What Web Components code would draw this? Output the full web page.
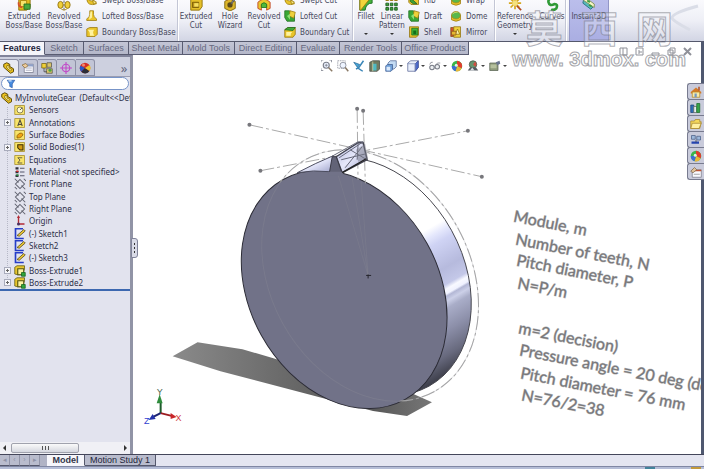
<!DOCTYPE html>
<html lang="en">
<head>
<meta charset="utf-8">
<title>MyInvoluteGear</title>
<style>
html,body{margin:0;height:100%}
body{overflow:hidden;font-family:"DejaVu Sans Condensed","DejaVu Sans",sans-serif;font-size:8px;color:#46485c}
</style>
</head>
<body>
<cad-app></cad-app>
<script>
const ICONS = {
  extrude:'<path d="M2 2l9-2 4 3v9l-4 3H2z" fill="#e3ba1c" stroke="#8d6e08"/><path d="M4 4h7v7H4z" fill="#f8e26a" stroke="#a8820c"/><path d="M8 8h7v6H8z" fill="#4aa83c" stroke="#236b20"/><path d="M2 6q-1 5 4 6" fill="none" stroke="#d4502a" stroke-width="2"/>',
  revolve:'<path d="M8 0v16" stroke="#555" stroke-dasharray="3 1"/><ellipse cx="4" cy="9" rx="3" ry="4" fill="#f0ce3a" stroke="#8d6e08"/><ellipse cx="12" cy="9" rx="3" ry="4" fill="#f0ce3a" stroke="#8d6e08"/><path d="M5 14q3 2 6 0" fill="none" stroke="#a8820c"/>',
  cut:'<path d="M2 3l4-3h9v11l-3 4H2z" fill="#e5c02a" stroke="#8d6e08"/><path d="M4 6h7v6H4z" fill="#b58e16" stroke="#7a5d06"/><path d="M6 7h5v4H6z" fill="#f4de62"/>',
  hole:'<path d="M2 5l5-3 7 3v8l-6 3-6-3z" fill="#dcb52a" stroke="#7d650d"/><ellipse cx="8" cy="9" rx="3" ry="3" fill="#5b4a1a"/><path d="M9 7l5-7 1 1-5 7z" fill="#8c8c9c" stroke="#555"/><path d="M2 1l3 3M5 0v3" stroke="#c24424"/>',
  revcut:'<path d="M1 6q7-7 14 0v7l-4 2V9q-3-3-6 0v6l-4-2z" fill="#e9c62e" stroke="#bf4126"/><path d="M5 8q3-3 6 0v4H5z" fill="#4fb83c" stroke="#257a20"/>',
  sweep:'<path d="M11 3q-8-3-8 3 0 4 8 3l3 4q-12 4-13-6 0-9 10-7z" fill="#e9c42a" stroke="#99780c"/><path d="M9 8l5 3-4 3z" fill="#f9e882" stroke="#99780c"/>',
  loft:'<path d="M5 1h5v5q0 3 4 6v2H1v-2q4-3 4-6z" fill="#e9c42a" stroke="#99780c"/><path d="M6 2h2v8l-4 3z" fill="#fbf0a0"/>',
  boundary:'<path d="M1 4l4-2h10v9l-3 3H1z" fill="#e9c42a" stroke="#99780c"/><path d="M2 5h9q-3 3 0 8H5q1-5-3-8z" fill="#fff3a0"/>',
  green:'<path d="M1 1h6l7 6v8H4L1 10z" fill="#39a735" stroke="#1d6b21"/><path d="M8 1l7 2-2 8-6-3z" fill="#efd13a" stroke="#99780c"/><path d="M4 8l4-3v8z" fill="#8be073"/>',
  gcut:'<path d="M1 5l4-3h10v9l-3 4H1z" fill="#e9c42a" stroke="#8f700c"/><path d="M1 5l4-3h10l-3 4z" fill="#43aa38" stroke="#1d6b21"/><path d="M3 8h8q-3 2-2 5H3z" fill="#fff3a0"/>',
  fillet:'<path d="M1 0h14v7q-7 0-8 8H1z" fill="#45b13c" stroke="#1d6b21"/><path d="M1 3l8-3h5L2 15H1z" fill="#f2d43c" stroke="#99780c"/>',
  pattern:'<path d="M1 1h3v3H1zM6 1h3v3H6zM11 1h3v3h-3z" fill="#eac52c" stroke="#8d6e08"/><path d="M1 7h3v3H1zM6 7h3v3H6zM11 7h3v3h-3zM1 12h3v3H1zM6 12h3v3H6zM11 12h3v3h-3z" fill="#3fa437" stroke="#1d5d21"/>',
  rib:'<path d="M1 1h7v6h6v7H4L1 11z" fill="#ebc82e" stroke="#8f700c"/><path d="M3 5l9 8H7L3 10z" fill="#3fa437" stroke="#1d5d21"/>',
  shell:'<path d="M2 1h12v11l-3 3H2z" fill="#e6c22a" stroke="#8f700c"/><path d="M5 3h8v9H5z" fill="#3fb838" stroke="#1b6e22"/><path d="M7 6h4v5H7z" fill="#146e1a"/>',
  dome:'<path d="M2 7v6q6 4 12 0V7z" fill="#e9c52b" stroke="#9a780c"/><ellipse cx="8" cy="7" rx="6" ry="5" fill="#58b84a" stroke="#b38614"/><path d="M3 6q3-5 8-3-5 0-8 3z" fill="#fbe878"/>',
  mirror:'<path d="M1 2h4v12H1z" fill="#d44f2a" stroke="#86501c"/><path d="M5 1h9v14H5z" fill="#f0d13b" stroke="#8f700c"/><path d="M7 11l3-7 3 7z" fill="#fff4a6" stroke="#8f700c"/><path d="M2 7h6v5H2z" fill="#e6b82e" stroke="#86501c"/>',
  ref:'<path d="M8 0v14M1 7h14M3 2l10 10M13 2L3 12" stroke="#d7a91f" stroke-width="2"/><circle cx="8" cy="7" r="3" fill="#f5e27d"/><path d="M10 10l5 5" stroke="#b24a1e" stroke-width="2"/>',
  curves:'<path d="M12 1q-9 0-8 5t7 2q4 0 2 5-3 3-6 1" fill="none" stroke="#2f9a36" stroke-width="3"/>',
  instant:'<path d="M2 2l11 9-3 3L1 7z" fill="#58b9bb" stroke="#25707d"/><path d="M3 0l11 8v4L2 4z" fill="#f5f6c4" stroke="#7e8b57"/><path d="M6 4l3 2M8 9l3 2" stroke="#3a9a3c" stroke-width="2"/>',
  part:'<path d="M1 3l4-2 4 2v3l5 3v4l-4 2-9-8z" fill="#edc31e" stroke="#5d4a0a" stroke-width="1.3"/><path d="M5 5l3-1v4l4 2-2 2-5-4z" fill="#fff08a" stroke="#7e640c"/>',
  prop:'<path d="M3 3h12v11H3z" fill="#fafaff" stroke="#77798c"/><path d="M3 3h12v3H3z" fill="#8ea0c8"/><path d="M5 8h8M5 11h8" stroke="#999bb0"/><path d="M0 4l5-2 3 3-4 3z" fill="#eecb9b" stroke="#8b7040"/>',
  config:'<path d="M1 2h6v6H1z" fill="#efd03a" stroke="#77600c"/><path d="M8 1h6v6H8zM7 9h8v6H7z" fill="#d9c36a" stroke="#55554c"/><path d="M4 8v5h4" stroke="#444" fill="none"/><circle cx="12" cy="11" r="2" fill="#4da640"/>',
  dim:'<circle cx="8" cy="8" r="5" fill="none" stroke="#c14ac8" stroke-width="1.6"/><path d="M8 0v16M0 8h16" stroke="#c14ac8" stroke-width="1.5"/>',
  ball:'<circle cx="8" cy="8" r="7" fill="#d62f25"/><path d="M8 8L2 5a7 7 0 0 0 1 8z" fill="#2b58c8"/><path d="M8 8l-5 5a7 7 0 0 0 11-1z" fill="#2c2e38"/><path d="M8 8l6 4a7 7 0 0 0 0-8z" fill="#ecc52c"/><circle cx="6" cy="4" r="2" fill="#ef8a70"/>',
  wheel:'<circle cx="8" cy="8" r="7" fill="#3bb54a"/><path d="M8 8V1a7 7 0 0 1 6 10z" fill="#e33b2d"/><path d="M8 8l6 3a7 7 0 0 1-8 4z" fill="#e8b83a"/><path d="M8 8l-2 7a7 7 0 0 1-5-7z" fill="#3d6fd0"/><circle cx="7" cy="7" r="2" fill="#dff6e6"/>',
  filter:'<path d="M2 2h12l-4 6v6l-4-2V8z" fill="#4a8ee0" stroke="#1e4fa0"/><path d="M4 3h5" stroke="#d4e8ff" stroke-width="2"/>',
  sensor:'<path d="M1 2h13v12H1z" fill="#f8e46a" stroke="#a18a28"/><circle cx="8" cy="8" r="4" fill="#fffbd2" stroke="#676042"/><path d="M8 8l3-3" stroke="#333"/>',
  annot:'<path d="M1 2h13v12H1z" fill="#f8e46a" stroke="#a18a28"/><path d="M5 12l3-8 3 8M6 10h4" fill="none" stroke="#4d4a3b" stroke-width="1.4"/>',
  surface:'<path d="M1 2h13v12H1z" fill="#f8e46a" stroke="#a18a28"/><path d="M4 9q4-6 8-2-1 5-8 5z" fill="#f0a412" stroke="#8a5a08"/>',
  solid:'<path d="M1 2h13v12H1z" fill="#f8e46a" stroke="#a18a28"/><path d="M5 5h7v7H8L5 9z" fill="#d39b12" stroke="#3b2d05" stroke-width="1.4"/>',
  equation:'<path d="M1 2h13v12H1z" fill="#f8e46a" stroke="#a18a28"/><path d="M11 5H5l3 3-3 4h6" fill="none" stroke="#666144" stroke-width="1.3"/>',
  material:'<path d="M2 3h4M2 8h4M2 13h4" stroke="#30303c" stroke-width="3"/><path d="M3 7h3" stroke="#d02424" stroke-width="2"/><path d="M3 12h3" stroke="#2b9740" stroke-width="2"/><path d="M8 3h6M8 8h6M8 13h6" stroke="#55566a" stroke-width="1.4"/>',
  plane:'<path d="M8 2l6 6-6 6-6-6z" fill="none" stroke="#60626f" stroke-width="1.4"/><path d="M1 1l5 5M10 10l5 5M13 1l3 3M1 12l3 3" stroke="#60626f" stroke-width="1.4"/>',
  origin:'<path d="M6 2v10h8" fill="none" stroke="#b22b36" stroke-width="1.8"/><path d="M6 0l2 4H4z" fill="#b22b36"/><circle cx="6" cy="12" r="2" fill="#4a3060"/>',
  sketch:'<path d="M12 1H2v13h11" fill="none" stroke="#263dc8" stroke-width="2.2"/><path d="M4 10l9-8 2 2-8 7z" fill="#ecc832" stroke="#4b421b"/>',
  boss:'<path d="M1 3l3-2h10v4l-3 8H5l-4-1z" fill="#e8c62d" stroke="#5a560f"/><path d="M5 5h8v8H5z" fill="#fbf1a2" stroke="#56560f" stroke-width="1.5"/><path d="M10 10h5v5h-5z" fill="#2fa43a" stroke="#17601f"/>',
  zoomfit:'<circle cx="7" cy="7" r="4" fill="#eef4ff" stroke="#7b7f8c" stroke-width="1.5"/><path d="M10 10l5 5" stroke="#8a7a66" stroke-width="2"/><path d="M0 3V0h3M11 0h3v3M0 11v3h3M5 7h4M7 5v4" fill="none" stroke="#777b88"/>',
  zoomarea:'<path d="M1 1h10v10H1z" fill="none" stroke="#888c98" stroke-dasharray="2 1"/><circle cx="8" cy="7" r="4" fill="#eef4ff" stroke="#7b7f8c"/><path d="M11 10l4 5" stroke="#8a7a66" stroke-width="2"/>',
  prev:'<path d="M1 3l8 3-3 4z" fill="#46a6d8" stroke="#2c6c99"/><path d="M14 1L7 11l6 4M4 12l4-2" fill="none" stroke="#3a86b8" stroke-width="2"/>',
  section:'<path d="M1 3l4-2h9v11l-3 3H1z" fill="#717a60" stroke="#454b44"/><path d="M5 5h5v9H5z" fill="#4db8c2"/><path d="M5 2v13" stroke="#d6d8a9"/>',
  views:'<path d="M4 4l3-3h8v8l-3 3H4z" fill="#c4dcf4" stroke="#586d98"/><path d="M1 8l2-2h7v7l-2 2H1z" fill="#6e9fd8" stroke="#3f5c90"/><path d="M2 9h5v5H2z" fill="#dbe9fa"/>',
  cube:'<path d="M1 4l4-3h10v9l-4 5H1z" fill="#e9effb" stroke="#5c6a98"/><path d="M11 5l4-4v9l-4 5z" fill="#4c6cce" stroke="#3b4c94"/><path d="M1 5h10v10" fill="none" stroke="#7c8bb6"/>',
  glasses:'<path d="M1 6q1-4 4-3M8 8q3-6 7-4" fill="none" stroke="#777b85"/><circle cx="4" cy="10" r="3" fill="#eceff2" stroke="#777b85" stroke-width="1.4"/><circle cx="11" cy="9" r="3" fill="#eceff2" stroke="#777b85" stroke-width="1.4"/>',
  scene:'<circle cx="8" cy="6" r="5" fill="#66956e" stroke="#46554a"/><path d="M8 6l3-4q3 4 0 7z" fill="#cf4f41"/><path d="M1 14l3-4h8l3 4z" fill="#555b61"/><path d="M4 14l3-4 3 4z" fill="#d8dce2"/>',
  camera:'<path d="M1 4h11v10H1z" fill="#8e9a7b" stroke="#5b6556"/><path d="M2 6h8v5H2z" fill="#b5c09d"/><path d="M9 3l5-2 1 4-4 2z" fill="#6a7690"/>',
  home:'<path d="M1 8l7-6 7 6v2H1z" fill="#d67b28"/><path d="M3 8h10v7H3z" fill="#f7ebaa" stroke="#b48525"/><path d="M6 10h3v5H6z" fill="#7598c0"/><path d="M11 1h2v5h-2z" fill="#b34e24"/>',
  library:'<path d="M1 4h4v10H1z" fill="#2f6fb8" stroke="#1e4478"/><path d="M5 6h4v8H5z" fill="#e5f0f0" stroke="#666"/><path d="M9 2h4v12H9z" fill="#38a54a" stroke="#1d6b2c"/>',
  open:'<path d="M1 4h5l1-2h6v3h2l-2 9H1z" fill="#f4d85c" stroke="#a5842b"/><path d="M3 7h12l-3 7H1z" fill="#fff0a1" stroke="#a5842b"/>',
  palette:'<path d="M2 2h5v5H2zM9 3h5v5H9z" fill="#9db8db" stroke="#4a5f85"/><path d="M2 10h10v3H2z" fill="#2544b0"/><path d="M8 8v3" stroke="#444"/>',
  custom:'<path d="M3 5h12v10H3z" fill="#fafaff" stroke="#777987"/><path d="M3 5h12v2H3z" fill="#c05434"/><path d="M1 7l5-5 3 3-5 4z" fill="#e0c39a" stroke="#7f684c"/><path d="M5 11h8" stroke="#888"/>'
};

function define(name, css, html, setup) {
  const template = document.createElement('template');
  template.innerHTML = `<style>*{box-sizing:border-box}button{font:inherit;color:inherit;background:none;border:0;padding:0;margin:0}${css}</style>${html}`;
  customElements.define(name, class extends HTMLElement {
    constructor() {
      super();
      this.attachShadow({mode: 'open'}).append(template.content.cloneNode(true));
    }
    connectedCallback() { if (setup) setup(this, this.shadowRoot); }
  });
}

// Puts the icon that the host's "icon" attribute names in place of the ".icon" marker.
function placeIcon(el, root) {
  const icon = document.createElement('ui-icon');
  icon.setAttribute('name', el.getAttribute('icon'));
  const marker = root.querySelector('.icon');
  if (marker) marker.replaceWith(icon);
}

define('ui-icon', ':host{display:block;width:12px;height:12px;flex:none}svg{display:block;width:100%;height:100%}',
  '<svg viewBox="0 0 16 16" aria-hidden="true"></svg>',
  (el, root) => root.querySelector('svg').innerHTML = ICONS[el.getAttribute('name')] || '');

define('ribbon-button', `
  :host{display:block;width:34px;flex:none}
  :host([wide]){width:40px}
  :host([active]){background:linear-gradient(#bcbfec,#aaaee2);border:1px solid #9296c6;border-width:0 1px}
  button{display:flex;flex-direction:column;align-items:center;width:100%;height:44px;line-height:9px;text-align:center}
  ui-icon{width:14px;height:14px;margin-bottom:1px}
  .label{height:18px;white-space:pre}
  .arrow{display:none;border:2px solid transparent;border-top-color:#333;margin-top:3px}
  :host([menu]) .arrow{display:block}`,
  '<button><i class="icon"></i><span class="label"><slot></slot></span><span class="arrow"></span></button>', placeIcon);

define('ribbon-item', `
  :host{display:block}
  button{display:flex;align-items:center;gap:4px;height:16px;white-space:nowrap}`,
  '<button><i class="icon"></i><span><slot></slot></span></button>', placeIcon);

define('ribbon-bar', `
  :host{display:flex;height:42px;align-items:flex-end;overflow:hidden;background:linear-gradient(#fafafd,#eeeff6 50%,#d2d5e4);border-bottom:1px solid #55586c}
  .group{display:flex;align-items:flex-end;height:49px;flex:none;border-right:1px solid #c3c6d5;box-shadow:1px 0 #fff}
  .stack{display:flex;flex-direction:column;padding-bottom:1px}
  .g1{width:178px;padding-left:4px}.g1 .stack{margin-left:2px}
  .g2{width:175px;padding-left:1px}.g2 .stack{margin-left:3px}
  .g3{width:142px}.g3 .narrow{width:26px}.g3 .stack{margin-left:3px;width:39px}
  .g4{width:71px}
  .g5{border:0;box-shadow:none;padding-left:3px}
  .logo{margin-left:auto;width:40px;height:40px;flex:none}`, `
  <div class="group g1">
    <ribbon-button wide icon="extrude">Extruded
Boss/Base</ribbon-button><ribbon-button wide icon="revolve">Revolved
Boss/Base</ribbon-button>
    <div class="stack"><ribbon-item icon="sweep">Swept Boss/Base</ribbon-item><ribbon-item icon="loft">Lofted Boss/Base</ribbon-item><ribbon-item icon="boundary">Boundary Boss/Base</ribbon-item></div>
  </div>
  <div class="group g2">
    <ribbon-button icon="cut">Extruded
Cut</ribbon-button><ribbon-button icon="hole">Hole
Wizard</ribbon-button><ribbon-button icon="revcut">Revolved
Cut</ribbon-button>
    <div class="stack"><ribbon-item icon="sweep">Swept Cut</ribbon-item><ribbon-item icon="green">Lofted Cut</ribbon-item><ribbon-item icon="gcut">Boundary Cut</ribbon-item></div>
  </div>
  <div class="group g3">
    <ribbon-button class="narrow" menu icon="fillet">Fillet</ribbon-button><ribbon-button class="narrow" menu icon="pattern">Linear
Pattern</ribbon-button>
    <div class="stack"><ribbon-item icon="rib">Rib</ribbon-item><ribbon-item icon="green">Draft</ribbon-item><ribbon-item icon="shell">Shell</ribbon-item></div>
    <div class="stack"><ribbon-item icon="dome">Wrap</ribbon-item><ribbon-item icon="dome">Dome</ribbon-item><ribbon-item icon="mirror">Mirror</ribbon-item></div>
  </div>
  <div class="group g4">
    <ribbon-button wide menu icon="ref">Reference
Geometry</ribbon-button><ribbon-button icon="curves">Curves</ribbon-button>
  </div>
  <div class="group g5"><ribbon-button wide active icon="instant">Instant3D</ribbon-button></div>
  <svg class="logo" viewBox="0 0 40 40" aria-hidden="true"><path d="M34 5Q8 12 8 17q1 3 18 12" fill="none" stroke="#dadde7" stroke-width="3"/></svg>`);

define('command-tabs', `
  :host{display:flex;height:13px;font:bold 9px/12px "Liberation Sans",sans-serif;color:#666980}
  button{flex:none;background:linear-gradient(#c3c5d5,#b4b7c9);border-right:1px solid #595c72;border-bottom:1px solid #595c72;font-weight:normal}
  button.on{background:#f5f5fa;color:#23243a;font-weight:bold;border-bottom-color:#f5f5fa}`,
  '', (el, root) => {
    const tabs = [['Features',45],['Sketch',39],['Surfaces',45],['Sheet Metal',54],['Mold Tools',52],['Direct Editing',62],['Evaluate',43],['Render Tools',62],['Office Products',67]];
    tabs.forEach(([label, width], i) => {
      const b = document.createElement('button');
      b.textContent = label;
      b.style.width = width + 'px';
      if (!i) b.className = 'on';
      root.append(b);
    });
  });

define('tree-item', `
  :host{display:flex;align-items:center;padding-left:4px;gap:3px;white-space:nowrap;min-height:0;line-height:12px}
  :host([root]){padding-left:1px;gap:2px}
  :host([root]) .box{display:none}
  .box{width:7px;height:7px;flex:none}
  :host([open]) .box{border:1px solid #a9acbc;background:linear-gradient(#666,#666) center/3px 1px no-repeat,linear-gradient(#666,#666) center/1px 3px no-repeat #f6f6fa}`,
  '<span class="box"></span><i class="icon"></i><span><slot></slot></span>', placeIcon);

define('feature-panel', `
  :host{display:flex;flex-direction:column;width:133px;flex:none;background:#e2e3ee;border-right:3px solid #9194a6;border-top:2px solid #80839a;overflow:hidden;color:#2e3048;font:8px/12px "Noto Sans",sans-serif}
  .tabs{display:flex;height:20px;align-items:center;background:#cdd0df;flex:none;border-bottom:1px solid #9a9db2}
  .tabs button{width:19px;height:17px;display:grid;place-items:center;border:1px solid #8d90a6;border-left:0;border-radius:0 3px 0 0;background:#c2c5d6;align-self:flex-end}
  .tabs button:first-child{background:#e9eaf3;border-bottom:0}
  .tabs .more{border:0;background:none;margin-left:auto;width:12px;font-size:13px;color:#62657d}
  .filter{display:flex;align-items:center;height:13px;flex:none;margin:0 1px;background:#fff;border:1px solid #7794c8;border-radius:7px;padding-left:4px}
  .filter input{flex:1;min-width:0;border:0;background:none;padding:0;height:9px;outline:0}
  .filter ui-icon{width:10px;height:10px}
  .tree{display:grid;grid-auto-rows:1fr;height:199px;flex:none;overflow:hidden;border-bottom:2px solid #3c68b0;background:repeating-linear-gradient(#b6b8c6 0 1px,transparent 1px 2px) 7px 15px/1px 177px no-repeat}
  .scroll{margin-top:auto;height:12px;display:flex;align-items:center;background:#f0f0f5;flex:none;padding:0 2px;gap:4px}
  .scroll i{border:3px solid transparent;border-right-color:#333;width:0;height:0;border-left:0;margin:0 1px}
  .scroll i:last-child{border-right:0;border-left:3px solid #333;margin-left:auto}
  .thumb{width:68px;height:10px;border:1px solid #a0a2ad;border-radius:2px;background:linear-gradient(#fafafa,#d5d7df);display:grid;place-items:center}
  .thumb::after{content:"";width:7px;height:4px;background:repeating-linear-gradient(90deg,#555 0 1px,transparent 1px 3px)}
  main{padding-top:2px}`, `
  <div class="tabs"><button aria-label="Feature tree"><ui-icon name="part"></ui-icon></button><button aria-label="Properties"><ui-icon name="prop"></ui-icon></button><button aria-label="Configurations"><ui-icon name="config"></ui-icon></button><button aria-label="Dimensions"><ui-icon name="dim"></ui-icon></button><button aria-label="Display"><ui-icon name="ball"></ui-icon></button><button class="more">»</button></div>
  <div class="filter"><ui-icon name="filter"></ui-icon><input aria-label="Filter"></div>
  <main><div class="tree">
    <tree-item root icon="part">MyInvoluteGear&nbsp; (Default&lt;&lt;Def</tree-item>
    <tree-item icon="sensor">Sensors</tree-item>
    <tree-item open icon="annot">Annotations</tree-item>
    <tree-item icon="surface">Surface Bodies</tree-item>
    <tree-item open icon="solid">Solid Bodies(1)</tree-item>
    <tree-item icon="equation">Equations</tree-item>
    <tree-item icon="material">Material &lt;not specified&gt;</tree-item>
    <tree-item icon="plane">Front Plane</tree-item>
    <tree-item icon="plane">Top Plane</tree-item>
    <tree-item icon="plane">Right Plane</tree-item>
    <tree-item icon="origin">Origin</tree-item>
    <tree-item icon="sketch">(-) Sketch1</tree-item>
    <tree-item icon="sketch">Sketch2</tree-item>
    <tree-item icon="sketch">(-) Sketch3</tree-item>
    <tree-item open icon="boss">Boss-Extrude1</tree-item>
    <tree-item open icon="boss">Boss-Extrude2</tree-item>
  </div></main>
  <div class="scroll"><i></i><div class="thumb"></div><i></i></div>`);

define('view-toolbar', `
  :host{display:flex;align-items:center;height:22px;gap:4px}
  button{display:flex;align-items:center;gap:2px}
  button.menu::after{content:"";border:2px solid transparent;border-top-color:#444;border-bottom:0}`, '',
  (el, root) => {
    [['zoomfit','Zoom to fit'],['zoomarea','Zoom to area'],['prev','Previous view'],['section','Section view'],['views','View orientation',1],['cube','Display style',1],['glasses','Hide or show items',1],['wheel','Edit appearance'],['scene','Apply scene',1],['camera','View settings',1]].forEach(([icon, label, menu]) => {
      const b = document.createElement('button');
      b.setAttribute('aria-label', label);
      if (menu) b.className = 'menu';
      b.innerHTML = `<ui-icon name="${icon}"></ui-icon>`;
      root.append(b);
    });
  });

define('task-pane', `
  :host{display:flex;flex-direction:column;width:17px}
  button{height:17px;display:grid;place-items:center;border:1px solid #787b8f;border-right:0;border-radius:3px 0 0 3px;background:#c9cbdb;margin-bottom:-1px}
  button:first-child{background:#f7f7fb}`, `
  <button aria-label="Resources"><ui-icon name="home"></ui-icon></button><button aria-label="Design library"><ui-icon name="library"></ui-icon></button><button aria-label="File explorer"><ui-icon name="open"></ui-icon></button><button aria-label="View palette"><ui-icon name="palette"></ui-icon></button><button aria-label="Appearances"><ui-icon name="wheel"></ui-icon></button><button aria-label="Custom properties"><ui-icon name="custom"></ui-icon></button>`);

define('model-scene', `
  :host{display:block;min-width:0;min-height:0;overflow:hidden}
  svg{display:block;width:100%;height:100%}
  .note{font:16px Lato,sans-serif;fill:#77777a;stroke:#77777a;stroke-width:1px;stroke-opacity:.5}
  .axis{font:9px "Liberation Sans",sans-serif}`, `
  <svg viewBox="133 55 568 400" role="img" aria-label="Gear model">
    <defs>
      <linearGradient id="rim" gradientUnits="userSpaceOnUse" x1="395" y1="165" x2="502" y2="348">
        <stop offset="0" stop-color="#fff"/><stop offset=".34" stop-color="#fff"/><stop offset=".38" stop-color="#e4e7fc"/><stop offset=".42" stop-color="#cfd3f4"/><stop offset=".54" stop-color="#b6badd"/><stop offset=".61" stop-color="#c4c8e8"/><stop offset=".63" stop-color="#f8f9ff"/><stop offset=".65" stop-color="#f0f2ff"/><stop offset=".66" stop-color="#b3b7d5"/><stop offset=".68" stop-color="#ccd0e8"/><stop offset=".71" stop-color="#a9adc8"/><stop offset=".8" stop-color="#8c8fa9"/><stop offset=".9" stop-color="#686a7e"/><stop offset="1" stop-color="#34353f"/>
      </linearGradient>
      <linearGradient id="shade" x1="0" x2="1"><stop offset="0" stop-color="#8a8a8a"/><stop offset=".4" stop-color="#6c6c6c"/><stop offset=".75" stop-color="#555"/><stop offset="1" stop-color="#777"/></linearGradient>
      <linearGradient id="facet" x1="0" x2="1" y2="1"><stop offset="0" stop-color="#b3b7da"/><stop offset=".5" stop-color="#e6e8fb"/><stop offset="1" stop-color="#9da1c8"/></linearGradient>
    </defs>
    <path d="M172 357L197 343 242 350 273 359 340 380 414 395 432 403 407 417 373 412 327 400 220 372z" fill="url(#shade)"/>
    <path d="M307 167A125 95 61 0 1 429 387A125 95 61 0 1 307 167z" fill="url(#rim)" stroke="#46464e"/>
    <path d="M242 90h124v68l-24 14-40 3-60 70z" fill="#fff"/>
    <ellipse cx="344" cy="290" rx="126" ry="95" transform="rotate(61 344 290)" fill="#717288" stroke="#2c2c36"/>
    <g fill="none" stroke="#aaa" stroke-dasharray="14 3 3 3">
      <path d="M249 125L482 177M260 171L468 131M357 109l2 161M363 111l5 165"/>
      <ellipse cx="370" cy="276" rx="133" ry="100" transform="rotate(61 370 276)"/>
    </g>
    <ellipse cx="344" cy="290" rx="125" ry="94" transform="rotate(61 344 290)" fill="#717288"/>
    <ellipse cx="370" cy="276" rx="133" ry="100" transform="rotate(61 370 276)" fill="none" stroke="#94929a" opacity=".25"/>
    <path d="M337 172l31 104M352 178l16 98M361 182l7 94" fill="none" stroke="#8c8c94" opacity=".25"/>
    <path d="M297 173q19-10 36-17l-3 16q-17-2-33 1z" fill="url(#facet)" stroke="#4b4c5e"/>
    <path d="M336 157l22-14h5l4 17-25 13z" fill="url(#facet)" stroke="#41424f" stroke-width="1.4"/>
    <path d="M331 157l27-15h5l-24 16M345 168l17-21M350 150l15 9M341 160l25-6M358 143l-1 17" fill="none" stroke="#666879"/>
    <path d="M356 150l9-6 3 15-10 3z" fill="#777988" opacity=".5"/>
    <path d="M329 174l3-17h4l6 17z" fill="#626377" stroke="#3b3b47"/><path d="M328 172h15v4h-15z" fill="#717288"/>
    <path d="M366 159l-24 14" stroke="#222" stroke-width="1.4"/>
    <g fill="#77777c"><circle cx="249" cy="125" r="2"/><circle cx="482" cy="177" r="2"/><circle cx="260" cy="171" r="2"/><circle cx="468" cy="131" r="2"/><circle cx="357" cy="109" r="2"/><circle cx="363" cy="111" r="2"/></g>
    <path d="M366 276h5M368 275v4" stroke="#26262e"/>
    <g class="note">
      <text transform="translate(513 222) rotate(11)">Module, m</text>
      <text transform="translate(515 245) rotate(11)">Number of teeth, N</text>
      <text transform="translate(516 266) rotate(11)">Pitch diameter, P</text>
      <text transform="translate(517 289) rotate(11)">N=P/m</text>
      <text transform="translate(518 334) rotate(11)">m=2 (decision)</text>
      <text transform="translate(519 356) rotate(11)">Pressure angle = 20 deg (de</text>
      <text transform="translate(520 379) rotate(11)">Pitch diameter = 76 mm</text>
      <text transform="translate(521 401) rotate(11)">N=76/2=38</text>
    </g>
    <path d="M160 414v-12" stroke="#1e5c2c" stroke-width="2"/><path d="M159 395l3 9h-6z" fill="#2f8c3c"/>
    <path d="M160 414l12 3" stroke="#9c1c20" stroke-width="2"/><path d="M176 418l-6-4v6z" fill="#c9262a"/>
    <path d="M160 414l-8 4" stroke="#1c2270" stroke-width="2"/><path d="M148 421l4-6 3 5z" fill="#2432a8"/>
    <g class="axis" text-anchor="middle"><text x="159" y="396" fill="#46604c">Y</text><text x="178" y="422" fill="#d03a3e">X</text><text x="146" y="425" fill="#3040d0">Z</text></g>
  </svg>`);

define('graphics-view', `
  :host{display:grid;grid-template:auto 1fr/minmax(0,1fr);flex:1;min-width:0;background:#fff;border-right:3px solid #4f5870;position:relative}
  model-scene{grid-area:1/1/3/2}
  view-toolbar{grid-area:1/1;justify-self:start;margin-left:188px}
  task-pane{position:absolute;right:-3px;top:28px}
  .grip{position:absolute;left:-2px;top:183px;width:7px;height:20px;border:1px solid #80839a;border-radius:0 3px 3px 0;background:#d9dbe7}
  .grip::after{content:"";position:absolute;left:2px;top:4px;width:1px;height:10px;background:repeating-linear-gradient(#333 0 2px,transparent 2px 4px)}`,
  '<model-scene></model-scene><view-toolbar></view-toolbar><task-pane></task-pane><div class="grip"></div>');

define('sheet-tabs', `
  :host{display:flex;height:12px;flex:none;background:#e4e5f0;border-top:1px solid #44465a;font:9px/10px "Liberation Sans",sans-serif;color:#33354a}
  button{border-right:1px solid #55586c;border-bottom:1px solid #55586c;background:#b9bccd}
  .nav{width:10px;color:#8f92a6;border-right-color:#9194a8;font-size:7px}
  .gap{width:7px;background:#b0b3c5}
  .on{background:#f6f6fb;font-weight:bold;width:38px;border-bottom-color:#f6f6fb}
  .study{width:71px;color:#23243a;white-space:nowrap}`,
  '<button class="nav" aria-label="First">◂</button><button class="nav" aria-label="Previous">‹</button><button class="nav" aria-label="Next">›</button><button class="nav" aria-label="Last">▸</button><span class="gap"></span><button class="on">Model</button><button class="study">Motion Study 1</button>');

define('status-strip', `
  :host{display:flex;height:3px;flex:none;background:#b5bdd6;border-top:1px solid #8087a3;justify-content:flex-end;gap:36px;padding-right:3px}
  i{width:10px;background:#42839b}i+i{background:#c39a3c}`, '<i></i><i></i>');

define('window-buttons', `
  :host{display:flex;gap:7px}
  button{width:9px;height:9px}
  svg{display:block;width:9px;height:9px;fill:none;stroke:#8f9199}`, `
  <button aria-label="Tile"><svg viewBox="0 0 9 9"><path d="M1 1h7v7H1zM4 1v7"/></svg></button><button aria-label="Split"><svg viewBox="0 0 9 9"><path d="M1 1h7v7H1zM4 3v4M4 5h3"/></svg></button><button aria-label="Minimize"><svg viewBox="0 0 9 9"><path d="M1 6h7v2H1z"/></svg></button><button aria-label="Restore"><svg viewBox="0 0 9 9"><path d="M3 1h5v5H3zM1 3h5v5H1z"/></svg></button><button aria-label="Close"><svg viewBox="0 0 9 9"><path d="M1 1l7 7M8 1L1 8" stroke-width="2"/></svg></button>`);

define('site-mark', `
  :host{display:flex;flex-direction:column;align-items:center;pointer-events:none}
  .cn{display:flex;gap:18px;font:bold 37px/40px "Noto Sans CJK SC",sans-serif;color:rgba(245,246,250,.3);-webkit-text-stroke:1px rgba(120,122,135,.6)}
  .url{font:bold 20px/24px "Liberation Sans",sans-serif;color:#fff;white-space:pre;-webkit-text-stroke:1px #a4a5aa}`,
  '<div class="cn"><span>莫</span><span>西</span><span>网</span></div><div class="url">www. 3dmox. com</div>');

define('cad-app', `
  :host{display:flex;flex-direction:column;height:100vh;position:relative;background:#fff;overflow:hidden}
  .top{background:linear-gradient(#4f5870,#4f5870) right/3px 100% no-repeat #fff}
  .work{display:flex;flex:1;min-height:0}
  window-buttons{position:absolute;right:12px;top:47px}
  site-mark{position:absolute;right:18px;top:7px}`,
  `<ribbon-bar></ribbon-bar><div class="top"><command-tabs></command-tabs></div>
  <div class="work"><feature-panel></feature-panel><graphics-view></graphics-view></div>
  <sheet-tabs></sheet-tabs><status-strip></status-strip>
  <site-mark></site-mark><window-buttons></window-buttons>`);
</script>
</body>
</html>
